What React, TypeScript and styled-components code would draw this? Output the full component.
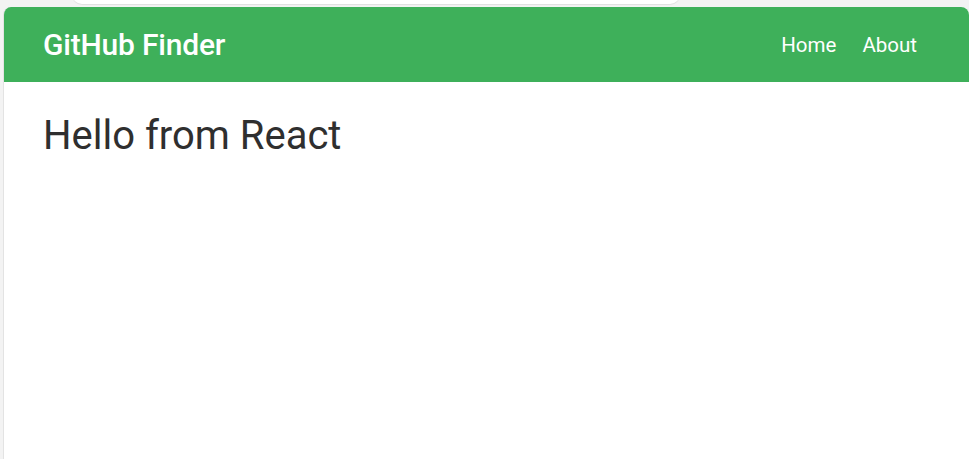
import React from "react";
import styled, { createGlobalStyle } from "styled-components";

const Global = createGlobalStyle`
  html, body { margin: 0; padding: 0; }
  body {
    background: #f3f3f3;
    font-family: Roboto, "Liberation Sans", Arial, sans-serif;
    overflow: hidden;
  }
`;

const Page = styled.div`
  position: relative;
  height: 459px;
  padding: 7px 0 0 3px;
  box-sizing: border-box;
  display: flex;
  flex-direction: column;
`;

const TabEdge = styled.div`
  position: absolute;
  top: -10px;
  left: 72px;
  width: 608px;
  height: 14px;
  background: #ffffff;
  border-radius: 0 0 10px 10px;
  box-shadow: 0 1px 1px rgba(0, 0, 0, 0.08);
`;

const Frame = styled.div`
  flex: 1;
  background: #ffffff;
  border-radius: 8px 8px 0 0;
  border-left: 1px solid #e3e3e3;
  overflow: hidden;
  display: flex;
  flex-direction: column;
`;

const Navbar = styled.nav`
  height: 75px;
  flex-shrink: 0;
  background: #3eb05a;
  display: flex;
  align-items: center;
  justify-content: space-between;
  padding: 0 52px 0 39px;
`;

const Brand = styled.h1`
  margin: 0;
  color: #ffffff;
  font-size: 30px;
  font-weight: 500;
  letter-spacing: -0.2px;
`;

const Links = styled.ul`
  list-style: none;
  margin: 0;
  padding: 0;
  display: flex;
  gap: 26px;
`;

const LinkItem = styled.li`
  color: #ffffff;
  font-size: 20.5px;
  font-weight: 400;
`;

const Content = styled.main`
  padding: 30px 39px;
`;

const Heading = styled.h2`
  margin: 0;
  color: #2f2f2f;
  font-size: 40px;
  font-weight: 400;
`;

export default function App() {
  return (
    <>
      <Global />
      <Page>
        <TabEdge />
        <Frame>
          <Navbar>
            <Brand>GitHub Finder</Brand>
            <Links>
              <LinkItem>Home</LinkItem>
              <LinkItem>About</LinkItem>
            </Links>
          </Navbar>
          <Content>
            <Heading>Hello from React</Heading>
          </Content>
        </Frame>
      </Page>
    </>
  );
}
